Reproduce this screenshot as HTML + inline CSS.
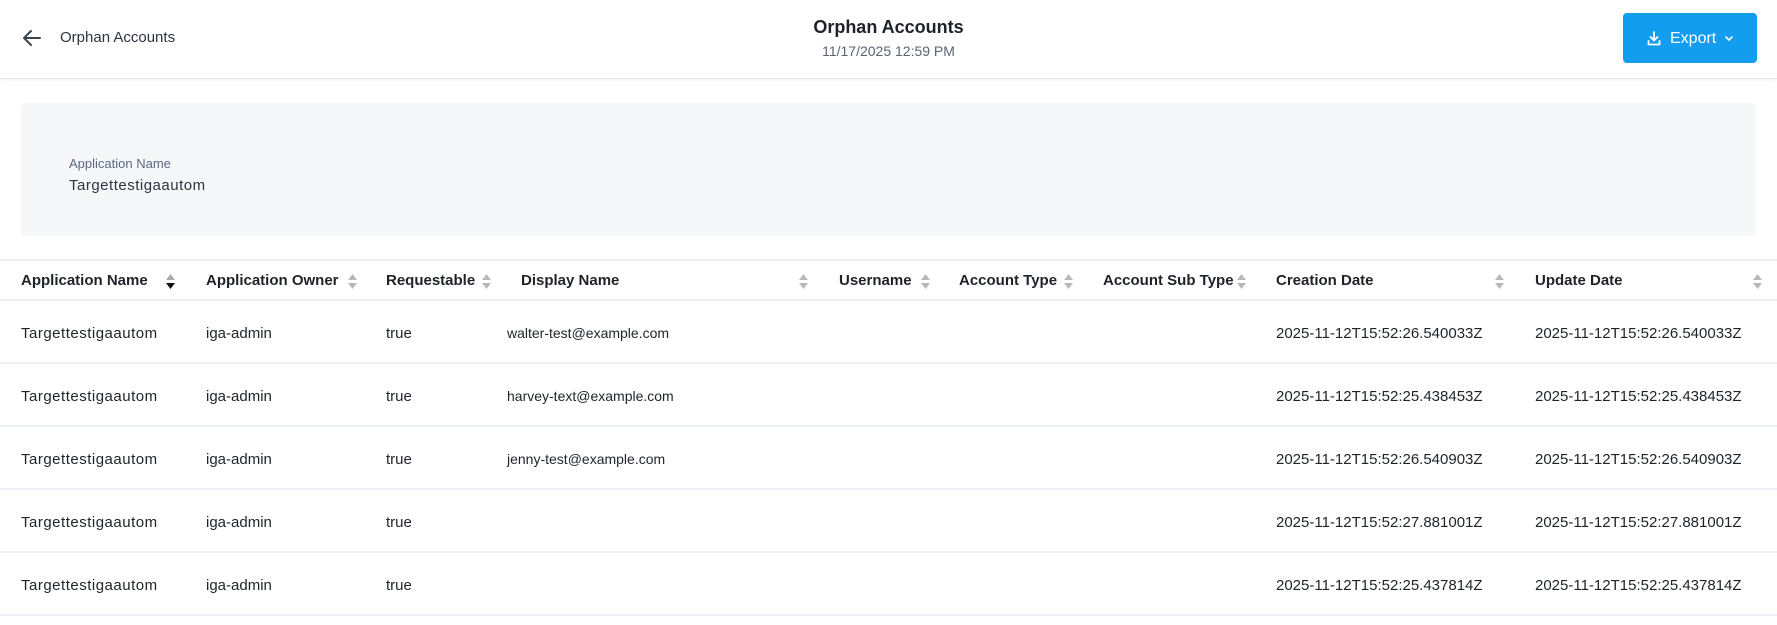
<!DOCTYPE html>
<html><head><meta charset="utf-8"><style>
*{margin:0;padding:0;box-sizing:border-box}
body{width:1777px;height:625px;overflow:hidden;background:#fff;font-family:"Liberation Sans",sans-serif;color:#1f2329;position:relative}
.a{position:absolute;white-space:nowrap}
.hdr{position:absolute;left:0;top:0;width:1777px;height:79px;border-bottom:1px solid #e3e6ea;box-shadow:0 1px 3px rgba(0,0,0,.05)}
.btn{position:absolute;left:1623px;top:13px;width:134px;height:50px;background:#139def;border-radius:4px;color:#fff;font-size:16px}
.panel{position:absolute;left:21px;top:103px;width:1735px;height:133px;background:#f6f7f9;border-radius:4px}
.line{position:absolute;left:0;width:1777px;height:2px;background:#edf0f4}
.th{font-weight:bold;font-size:15px;color:#1f2329}
.td{font-size:15px;color:#1f2329}
.n{letter-spacing:0.5px}
.s{position:absolute;width:9px;height:15px}
</style></head><body>
<div class="hdr"></div>
<svg class="a" style="left:22px;top:29px" width="20" height="18" viewBox="0 0 20 18"><path d="M18 9H3M9 2L2 9l7 7" fill="none" stroke="#3b4350" stroke-width="2" stroke-linecap="round" stroke-linejoin="round"/></svg>
<div class="a" style="left:60px;top:29px;font-size:15px;color:#2c3440">Orphan Accounts</div>
<div class="a" style="left:0;width:1777px;text-align:center;top:17px;font-size:18px;font-weight:bold">Orphan Accounts</div>
<div class="a" style="left:0;width:1777px;text-align:center;top:43px;font-size:14px;color:#5b6470">11/17/2025 12:59 PM</div>
<div class="btn">
<svg class="a" style="left:24px;top:18px" width="14" height="15" viewBox="0 0 14 15"><path d="M7 1v8M3.5 6L7 9.5 10.5 6M1.5 10v3.5h11V10" fill="none" stroke="#fff" stroke-width="1.8" stroke-linecap="round" stroke-linejoin="round"/></svg>
<div class="a" style="left:47px;top:17px">Export</div>
<svg class="a" style="left:101px;top:22px" width="10" height="8" viewBox="0 0 10 8"><path d="M2 2l3 3 3-3" fill="none" stroke="#fff" stroke-width="1.6" stroke-linecap="round"/></svg>
</div>
<div class="panel"></div>
<div class="a" style="left:69px;top:156px;font-size:13px;color:#5b6780">Application Name</div>
<div class="a n" style="left:69px;top:177px;font-size:15px;color:#2c3440">Targettestigaautom</div>
<div class="line" style="top:259px"></div>
<div class="line" style="top:299px"></div>
<div class="line" style="top:362px"></div>
<div class="line" style="top:425px"></div>
<div class="line" style="top:488px"></div>
<div class="line" style="top:551px"></div>
<div class="line" style="top:614px"></div>
<div class="a th" style="left:21px;top:272px">Application Name</div>
<div class="a th" style="left:206px;top:272px">Application Owner</div>
<div class="a th" style="left:386px;top:272px">Requestable</div>
<div class="a th" style="left:521px;top:272px">Display Name</div>
<div class="a th" style="left:839px;top:272px">Username</div>
<div class="a th" style="left:959px;top:272px">Account Type</div>
<div class="a th" style="left:1103px;top:272px">Account Sub Type</div>
<div class="a th" style="left:1276px;top:272px">Creation Date</div>
<div class="a th" style="left:1535px;top:272px">Update Date</div>
<svg class="s" style="left:166px;top:274px" viewBox="0 0 9 15"><path d="M4.5 0L9 6H0z" fill="#aaa"/><path d="M4.5 15L9 9H0z" fill="#111"/></svg>
<svg class="s" style="left:348px;top:274px" viewBox="0 0 9 15"><path d="M4.5 0L9 6H0zM4.5 15L9 9H0z" fill="#b5b8bd"/></svg>
<svg class="s" style="left:482px;top:274px" viewBox="0 0 9 15"><path d="M4.5 0L9 6H0zM4.5 15L9 9H0z" fill="#b5b8bd"/></svg>
<svg class="s" style="left:799px;top:274px" viewBox="0 0 9 15"><path d="M4.5 0L9 6H0zM4.5 15L9 9H0z" fill="#b5b8bd"/></svg>
<svg class="s" style="left:921px;top:274px" viewBox="0 0 9 15"><path d="M4.5 0L9 6H0zM4.5 15L9 9H0z" fill="#b5b8bd"/></svg>
<svg class="s" style="left:1064px;top:274px" viewBox="0 0 9 15"><path d="M4.5 0L9 6H0zM4.5 15L9 9H0z" fill="#b5b8bd"/></svg>
<svg class="s" style="left:1237px;top:274px" viewBox="0 0 9 15"><path d="M4.5 0L9 6H0zM4.5 15L9 9H0z" fill="#b5b8bd"/></svg>
<svg class="s" style="left:1495px;top:274px" viewBox="0 0 9 15"><path d="M4.5 0L9 6H0zM4.5 15L9 9H0z" fill="#b5b8bd"/></svg>
<svg class="s" style="left:1753px;top:274px" viewBox="0 0 9 15"><path d="M4.5 0L9 6H0zM4.5 15L9 9H0z" fill="#b5b8bd"/></svg>

<div class="a td n" style="left:21px;top:325px">Targettestigaautom</div><div class="a td" style="left:206px;top:325px">iga-admin</div><div class="a td" style="left:386px;top:325px">true</div><div class="a td" style="left:507px;top:325px;font-size:14px">walter-test@example.com</div><div class="a td" style="left:1276px;top:325px">2025-11-12T15:52:26.540033Z</div><div class="a td" style="left:1535px;top:325px">2025-11-12T15:52:26.540033Z</div>

<div class="a td n" style="left:21px;top:388px">Targettestigaautom</div><div class="a td" style="left:206px;top:388px">iga-admin</div><div class="a td" style="left:386px;top:388px">true</div><div class="a td" style="left:507px;top:388px;font-size:14px">harvey-text@example.com</div><div class="a td" style="left:1276px;top:388px">2025-11-12T15:52:25.438453Z</div><div class="a td" style="left:1535px;top:388px">2025-11-12T15:52:25.438453Z</div>

<div class="a td n" style="left:21px;top:451px">Targettestigaautom</div><div class="a td" style="left:206px;top:451px">iga-admin</div><div class="a td" style="left:386px;top:451px">true</div><div class="a td" style="left:507px;top:451px;font-size:14px">jenny-test@example.com</div><div class="a td" style="left:1276px;top:451px">2025-11-12T15:52:26.540903Z</div><div class="a td" style="left:1535px;top:451px">2025-11-12T15:52:26.540903Z</div>

<div class="a td n" style="left:21px;top:514px">Targettestigaautom</div><div class="a td" style="left:206px;top:514px">iga-admin</div><div class="a td" style="left:386px;top:514px">true</div><div class="a td" style="left:1276px;top:514px">2025-11-12T15:52:27.881001Z</div><div class="a td" style="left:1535px;top:514px">2025-11-12T15:52:27.881001Z</div>

<div class="a td n" style="left:21px;top:577px">Targettestigaautom</div><div class="a td" style="left:206px;top:577px">iga-admin</div><div class="a td" style="left:386px;top:577px">true</div><div class="a td" style="left:1276px;top:577px">2025-11-12T15:52:25.437814Z</div><div class="a td" style="left:1535px;top:577px">2025-11-12T15:52:25.437814Z</div>
</body></html>
